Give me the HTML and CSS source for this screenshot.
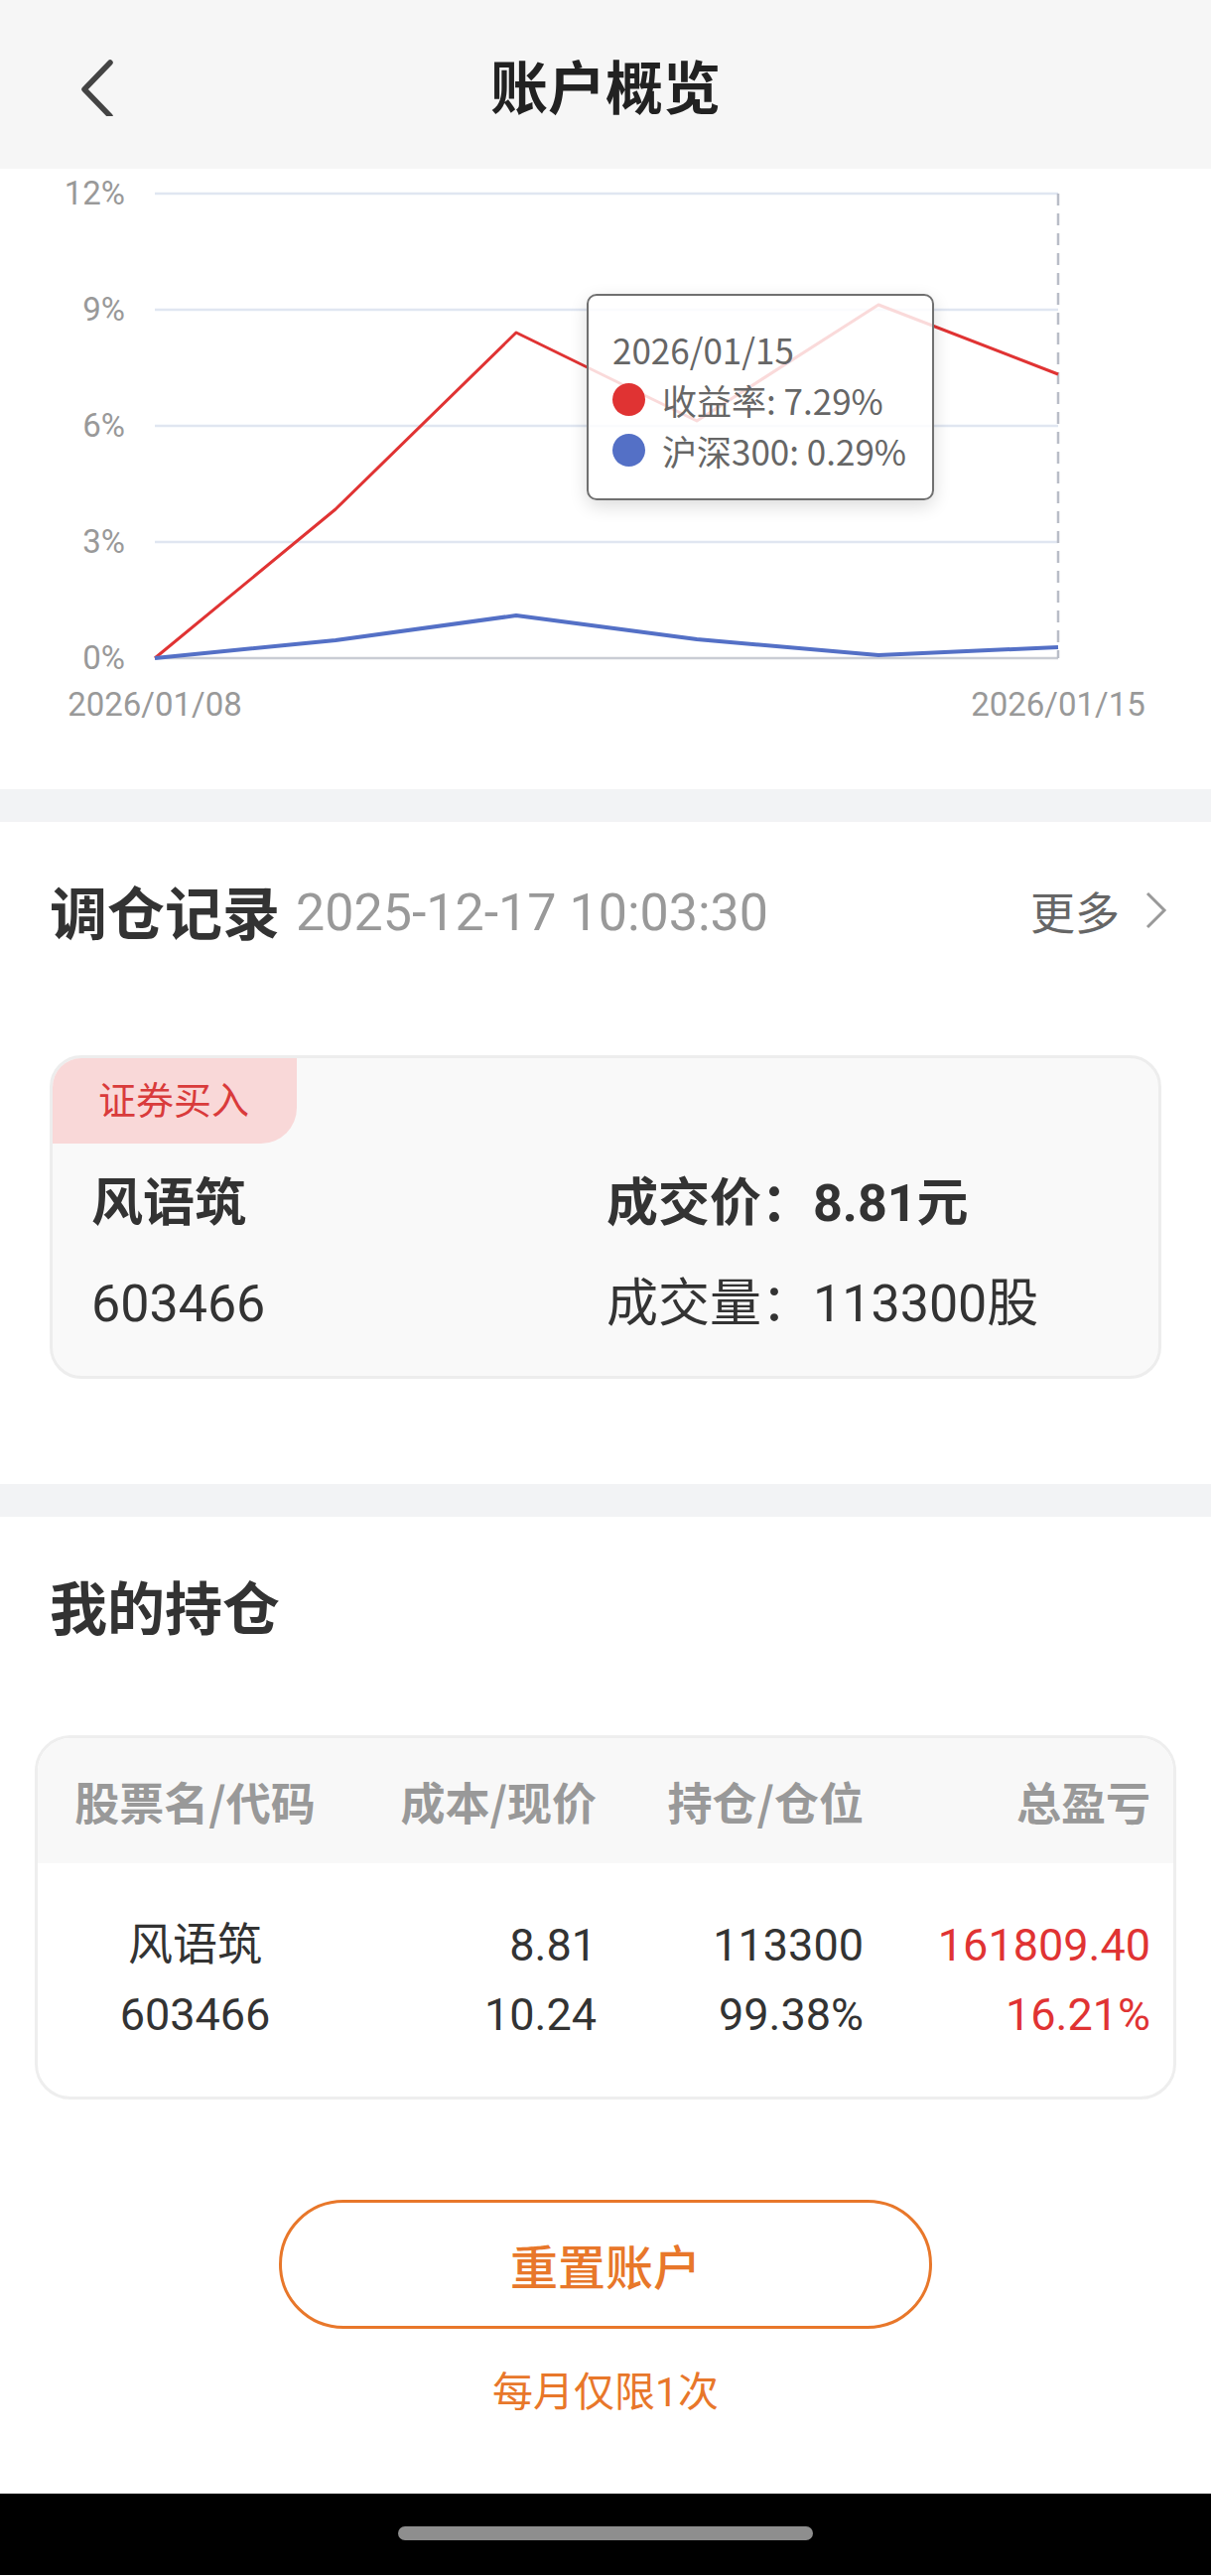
FILE: index.html
```html
<!DOCTYPE html>
<html lang="zh-CN">
<head>
    <meta charset="UTF-8">
    <meta name="viewport" content="width=device-width, initial-scale=1.0">
    <title>账户概览</title>
    <link rel="stylesheet" href="styles.css">
</head>
<body>
    <header class="topbar">
        <a href="#" class="back-button">
            <svg width="40" height="60" viewBox="0 0 40 60">
                <path d="M31 6 L5 33 L31 60" fill="none" stroke="#444" stroke-width="5.5" stroke-linecap="round" stroke-linejoin="round"/>
            </svg>
        </a>
        <h1>账户概览</h1>
        <span></span>
    </header>

    <!-- 收益走势 -->
    <section class="chart-box">
        <svg class="chart" width="1220" height="625" viewBox="0 0 1220 625">
            <g stroke="#e0e6f1" stroke-width="2.5">
                <line x1="156" y1="25" x2="1066" y2="25"/>
                <line x1="156" y1="142" x2="1066" y2="142"/>
                <line x1="156" y1="259" x2="1066" y2="259"/>
                <line x1="156" y1="376" x2="1066" y2="376"/>
            </g>
            <line x1="156" y1="493" x2="1066" y2="493" stroke="#c9ccd4" stroke-width="2.5"/>
            <line x1="1066" y1="25" x2="1066" y2="493" stroke="#b9bdc7" stroke-width="2.5" stroke-dasharray="12 8"/>
            <g class="axis-label" text-anchor="end">
                <text x="126" y="36">12%</text>
                <text x="126" y="153">9%</text>
                <text x="126" y="270">6%</text>
                <text x="126" y="387">3%</text>
                <text x="126" y="504">0%</text>
            </g>
            <g class="axis-label" text-anchor="middle">
                <text x="156" y="551">2026/01/08</text>
                <text x="1066" y="551">2026/01/15</text>
            </g>
            <polyline points="156,493 338,343 520,165 702,254 885,137 1066,207" fill="none" stroke="#e03333" stroke-width="3" stroke-linejoin="round"/>
            <polyline points="156,493 338,475 520,450 702,474 885,490 1066,482" fill="none" stroke="#5470c6" stroke-width="4" stroke-linejoin="round"/>
        </svg>
        <div class="tooltip">
            <div class="tip-date">2026/01/15</div>
            <div class="tip-row"><span class="dot dot-red"></span>收益率: 7.29%</div>
            <div class="tip-row"><span class="dot dot-blue"></span>沪深300: 0.29%</div>
        </div>
    </section>

    <div class="gap"></div>

    <!-- 调仓记录 -->
    <section class="block">
        <div class="block-head">
            <h2>调仓记录</h2>
            <span class="record-time">2025-12-17 10:03:30</span>
            <a href="#" class="more">更多
                <svg width="22" height="38" viewBox="0 0 22 38">
                    <path d="M2 2 L19 19 L2 36" fill="none" stroke="#999" stroke-width="3"/>
                </svg>
            </a>
        </div>
        <div class="trade-card">
            <div class="trade-tag">证券买入</div>
            <div class="trade-grid">
                <div class="stock-name">风语筑</div>
                <div class="trade-price">成交价：8.81元</div>
                <div>603466</div>
                <div>成交量：113300股</div>
            </div>
        </div>
    </section>

    <div class="gap"></div>

    <!-- 我的持仓 -->
    <section class="block holdings">
        <div class="block-head">
            <h2>我的持仓</h2>
        </div>
        <div class="hold-table">
            <div class="hold-row hold-head">
                <div class="col-name">股票名/代码</div>
                <div>成本/现价</div>
                <div>持仓/仓位</div>
                <div>总盈亏</div>
            </div>
            <div class="hold-row hold-body">
                <div class="col-name">风语筑<br>603466</div>
                <div>8.81<br>10.24</div>
                <div>113300<br>99.38%</div>
                <div class="rise">161809.40<br>16.21%</div>
            </div>
        </div>
        <button class="reset-button">重置账户</button>
        <p class="reset-note">每月仅限1次</p>
    </section>

    <footer class="nav-bar">
        <div class="home-indicator"></div>
    </footer>
</body>
</html>
```

FILE: styles.css
```css
body {
    margin: 0;
    font-family: Roboto, "Noto Sans CJK SC", sans-serif;
    background-color: #ffffff;
    color: #333;
}
.topbar {
    height: 170px;
    background-color: #f6f6f6;
    display: grid;
    grid-template-columns: 1fr auto 1fr;
    align-items: center;
}
.back-button {
    display: flex;
    padding-left: 80px;
    padding-top: 4px;
}
.topbar h1 {
    margin: 0;
    font-size: 58px;
    font-weight: bold;
    color: #222;
    font-family: "Noto Sans CJK SC", sans-serif;
}
.chart-box {
    position: relative;
    height: 625px;
}
.chart {
    display: block;
}
.axis-label {
    font-family: Roboto, sans-serif;
    font-size: 33px;
    fill: #999;
}
.tooltip {
    position: absolute;
    left: 591px;
    top: 126px;
    width: 322px;
    height: 176px;
    padding: 28px 0 0 24px;
    border: 2px solid #707070;
    border-radius: 10px;
    background: rgba(255, 255, 255, 0.82);
    box-shadow: 0 6px 18px rgba(0, 0, 0, 0.14);
    font-family: "Noto Sans CJK SC", sans-serif;
    font-size: 35px;
    line-height: 51px;
    color: #666;
}
.tip-row {
    display: flex;
    align-items: center;
}
.dot {
    width: 33px;
    height: 33px;
    border-radius: 50%;
    margin-right: 17px;
}
.dot-red {
    background-color: #e03333;
}
.dot-blue {
    background-color: #5470c6;
}
.gap {
    height: 33px;
    background-color: #f2f3f5;
}
.block {
    padding: 49px 50px 106px;
}
.block-head {
    display: flex;
    align-items: center;
    height: 80px;
    padding-left: 0;
}
.block-head h2 {
    margin: 0;
    font-size: 58px;
    font-weight: bold;
    color: #333;
    font-family: "Noto Sans CJK SC", sans-serif;
}
.record-time {
    margin-left: 16px;
    margin-top: 4px;
    font-size: 52px;
    color: #999;
}
.more {
    margin-left: auto;
    display: flex;
    align-items: center;
    gap: 26px;
    font-size: 45px;
    color: #666;
    text-decoration: none;
    margin-right: -6px;
}
.trade-card {
    margin-top: 106px;
    border: 3px solid #ededed;
    border-radius: 32px;
    background-color: #f9f9f9;
    overflow: hidden;
}
.trade-tag {
    width: 200px;
    height: 86px;
    padding-left: 46px;
    line-height: 86px;
    background-color: #f9d8d8;
    color: #d93b3b;
    font-size: 38px;
    border-bottom-right-radius: 36px;
}
.trade-grid {
    display: grid;
    grid-template-columns: 519px 1fr;
    row-gap: 31px;
    padding: 26px 0 37px 39px;
    font-size: 52px;
    line-height: 70px;
    color: #333;
}
.stock-name,
.trade-price {
    font-weight: bold;
}
.holdings {
    padding: 49px 35px 77px;
}
.holdings .block-head {
    padding-left: 15px;
}
.hold-table {
    margin-top: 91px;
    border: 3px solid #eeeeee;
    border-radius: 36px;
    overflow: hidden;
}
.hold-row {
    display: grid;
    grid-template-columns: 317px 246px 269px 289px;
    padding-right: 23px;
    text-align: right;
}
.hold-row .col-name {
    text-align: center;
}
.hold-head {
    height: 126px;
    align-items: center;
    background-color: #f8f8f8;
    font-size: 45px;
    font-weight: bold;
    color: #999;
    font-family: "Noto Sans CJK SC", sans-serif;
}
.hold-body {
    height: 235px;
    align-items: center;
    font-size: 45px;
    line-height: 70px;
    color: #333;
}
.rise {
    color: #e03333;
}
.reset-button {
    display: block;
    width: 658px;
    height: 130px;
    margin: 101px auto 0;
    border: 3px solid #e8772a;
    border-radius: 65px;
    background-color: #ffffff;
    color: #e8772a;
    font-size: 48px;
    font-weight: 500;
    font-family: "Noto Sans CJK SC", sans-serif;
    cursor: pointer;
}
.reset-note {
    margin: 39px 0 0;
    text-align: center;
    font-size: 41px;
    line-height: 50px;
    color: #e8772a;
}
.nav-bar {
    height: 82px;
    background-color: #000;
    display: flex;
    justify-content: center;
    padding-top: 33px;
    box-sizing: border-box;
}
.home-indicator {
    width: 418px;
    height: 14px;
    border-radius: 7px;
    background-color: #8e8e8e;
}
```
